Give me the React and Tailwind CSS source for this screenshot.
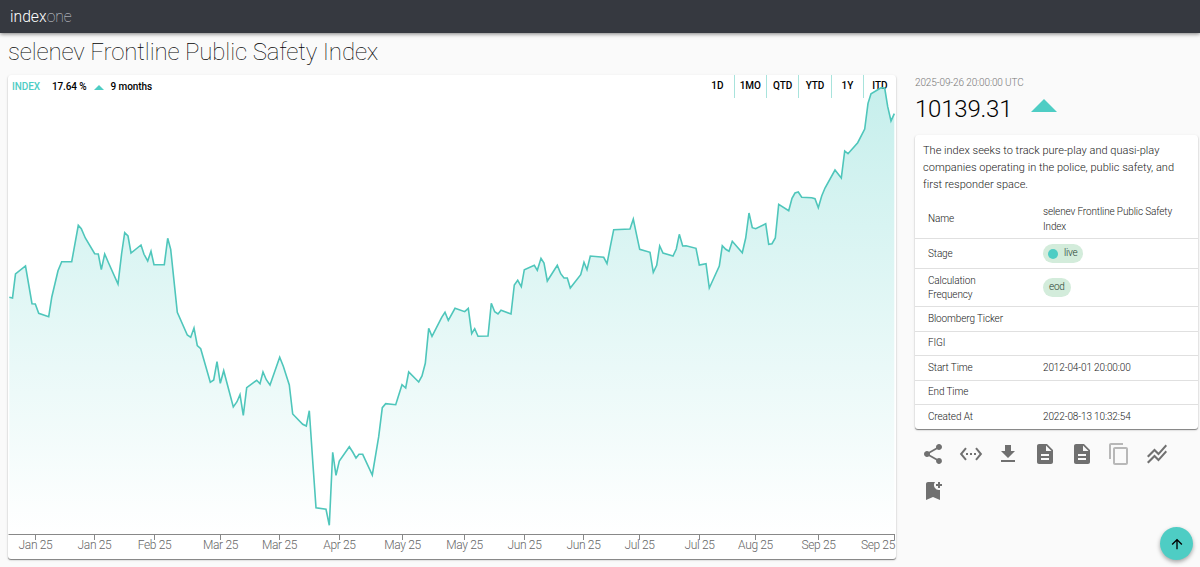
import {
    MdShare,
    MdSettingsEthernet,
    MdGetApp,
    MdDescription,
    MdContentCopy,
    MdStackedLineChart,
    MdBookmarkAdd,
    MdArrowUpward
} from 'react-icons/md';

const ranges = ['1D', '1MO', 'QTD', 'YTD', '1Y', 'ITD'];

const ticks = [
    [35.5, 'Jan 25'], [94.5, 'Jan 25'], [154.5, 'Feb 25'], [220.5, 'Mar 25'], [279.5, 'Mar 25'],
    [339.5, 'Apr 25'], [402.5, 'May 25'], [464.5, 'May 25'], [524.5, 'Jun 25'], [583.5, 'Jun 25'],
    [639.5, 'Jul 25'], [699.5, 'Jul 25'], [755.5, 'Aug 25'], [818.5, 'Sep 25'], [894.5, 'Sep 25'],
];

const line = `
    9.3,297.3 12.5,298 15.5,274 25.5,266 32,303.7 35.3,304 38.7,313.3 48.7,316.7 51.8,297 58,270.7
    61.7,261.7 71.7,261.7 78.3,225.3 81.3,228.7 85.3,238 94.7,253.7 98.3,254 101.3,269.7 104.7,254
    108.6,263 118,284 121.7,253 124.7,232.7 128,236 131,253 141,245 144,254.3 147.7,261 151,251.3
    154,264.7 164.3,264.7 167.7,238.3 170.7,249.3 177.3,312.3 187.3,335 190.7,337.3 194,328
    197.3,345.7 200.7,348.7 210.3,382.3 213.7,380 217,361.7 220.3,383.3 223.7,370.7 233.3,407
    237,401.7 240,394.7 243.3,415.3 246.7,387.7 256.7,380.3 260,383.7 263,372 266.3,379.7 270,385
    279.7,357.3 283.3,366.3 289.3,385 292.7,414 302.7,424.3 306.3,426 309.3,410.7 313,465 316,507.7
    326,509.3 329.3,525.3 332.7,452.3 336,475.3 339.3,461 349.3,446.7 352.7,452 356,458 359,454.3
    362.7,454.3 372.3,475 378.7,436.7 382.3,407.7 385.7,403.7 395.7,404.7 402,384.7 405.7,388
    408.7,372 418.7,382 422,376 425.3,363.3 428.7,328.3 432,336.3 441.7,317.3 445,312.3 448.3,320.3
    455,308.3 464.7,311.7 468.3,308.3 471.7,333.7 474.7,328.7 478,336.3 488,336 491.3,303.3
    494.7,311.7 498,314 501,310.3 511,314 514.3,285 517.7,280.3 521.3,286.7 524.3,269.7 534.3,265.3
    537.3,270.3 541,258.3 544,263 547.3,281 557.3,265.3 560.7,273.7 564,278 567.3,278 570.3,288
    580.7,274.7 584,262.3 587,269.7 590.3,256 603.7,257.3 607,263.7 610.3,246.7 613.7,229.7 630,229
    633.3,219 636.7,235.3 639.7,249.3 650,252.3 653.3,272.3 656.7,265.3 659.7,246 663,253 673,256
    676.3,249 679.3,234.3 682.7,246 686,245.7 696,248.3 699.3,265 706,263.7 709.3,288 719.3,266
    722.3,245.7 725.7,249.3 729,251.3 732.3,241.3 742.3,252.7 745.7,238 749,213 752.3,227.7
    755.7,228.7 765.7,223.7 768.7,244.3 772,243.7 775.3,238 778.7,204.3 788.7,210.7 792,198.3
    795,193 798.3,192 801.7,197.3 811.7,197.7 815,198.7 818.3,207.7 821.7,196 825,188 835,170
    841.3,178 844.7,151 848,153.7 857.7,142.7 864.7,129 868,103.3 871,93.7 881,87.7 884.7,88
    887.7,106.7 891,121 894.3,113.7`;

const rows = [
    { label: 'Name', value: 'selenev Frontline Public Safety Index', height: 'h-[38.5px]' },
    { label: 'Stage', value: <Badge dot>live</Badge>, height: 'h-[30px]' },
    { label: 'Calculation Frequency', value: <Badge>eod</Badge>, height: 'h-[38px]' },
    { label: 'Bloomberg Ticker', value: '', height: 'h-[24.5px]' },
    { label: 'FIGI', value: '', height: 'h-[24.5px]' },
    { label: 'Start Time', value: '2012-04-01 20:00:00', height: 'h-[24.5px]' },
    { label: 'End Time', value: '', height: 'h-[24.5px]' },
    { label: 'Created At', value: '2022-08-13 10:32:54', height: 'h-[24.5px]' },
];

const actions = [
    { icon: MdShare },
    { icon: MdSettingsEthernet },
    { icon: MdGetApp },
    { icon: MdDescription },
    { icon: MdDescription },
    { icon: MdContentCopy, disabled: true },
    { icon: MdStackedLineChart },
    { icon: MdBookmarkAdd },
];

function Badge({ dot, children }) {
    return (
        <span className="inline-flex h-[19px] items-center rounded-full bg-[#d3ecdb] px-1.5 pb-px text-[10px] font-light tracking-[-0.25px] text-[#1f3a2c]">
            {dot && <span className="-ml-px mr-1.5 mt-px h-2.5 w-2.5 rounded-full bg-[#4ecdc4]" />}
            {children}
        </span>
    );
}

function Chart() {
    return (
        <svg className="absolute inset-0 h-full w-full" viewBox="8 75 888 484">
            <defs>
                <linearGradient id="area" x1="0" y1="87" x2="0" y2="534" gradientUnits="userSpaceOnUse">
                    <stop offset="0" stopColor="#4ecdc4" stopOpacity="0.32" />
                    <stop offset="1" stopColor="#4ecdc4" stopOpacity="0" />
                </linearGradient>
            </defs>
            <polygon points={`9.3,534 ${line} 894.3,534`} fill="url(#area)" />
            <polyline points={line} fill="none" stroke="#4fc6bb" strokeWidth="1.6" />

            {/* Time axis */}
            <path d="M8.5 534.5H894.5" stroke="#888" fill="none" />
            {ticks.map(([x, label], i) => (
                <g key={x}>
                    <path d={`M${x} 534V540`} stroke="#888" />
                    <text
                        x={i === ticks.length - 1 ? 895 : x}
                        y="549"
                        textAnchor={i === ticks.length - 1 ? 'end' : 'middle'}
                        className="fill-[#666] text-[12px] font-light tracking-[-0.35px]"
                    >
                        {label}
                    </text>
                </g>
            ))}
        </svg>
    );
}

export default function App() {
    return (
        <div className="flex h-screen flex-col overflow-hidden bg-[#fafafa] font-[Roboto,sans-serif] text-black">
            {/* Top bar */}
            <header className="z-10 flex h-[33px] shrink-0 items-center bg-[#363940] px-2.5 text-[15.7px] font-light text-white shadow-[0_1px_4px_rgba(0,0,0,0.5)]">
                index<span className="font-thin text-gray-300">one</span>
            </header>

            <h1 className="h-[42px] shrink-0 pl-2 pt-[2px] text-[24px] font-thin leading-[34px] tracking-[-0.13px] text-black">
                selenev Frontline Public Safety Index
            </h1>

            <main className="flex items-start">
                {/* Chart card */}
                <section className="relative ml-2 h-[484px] w-[888px] shrink-0 rounded-[3px] bg-white shadow-[0_1px_1px_rgba(0,0,0,0.45),0_1px_3px_rgba(0,0,0,0.12)]">
                    <div className="flex justify-between text-[10px] font-medium tracking-[-0.1px]">
                        <div className="flex h-[23px] items-center pl-1">
                            <span className="text-[#4ecdc4]">INDEX</span>
                            <span className="ml-3">17.64 %</span>
                            <span className="ml-[7px] mt-0.5 border-x-[5px] border-b-[5px] border-x-transparent border-b-[#4ecdc4]" />
                            <span className="ml-[7px]">9 months</span>
                        </div>
                        <div className="flex h-[23px] pr-[0.5px]">
                            {ranges.map((range) => (
                                <button
                                    key={range}
                                    className="w-[32.4px] border-l border-[#a8e3dc] pb-0.5 first:border-l-0"
                                >
                                    {range}
                                </button>
                            ))}
                        </div>
                    </div>
                    <Chart />
                </section>

                {/* Index details */}
                <aside className="ml-[19px] w-[283px] shrink-0">
                    <div className="text-[10px] font-light leading-4 tracking-[-0.12px] text-[#777]">2025-09-26 20:00:00 UTC</div>
                    <div className="flex h-[44px] items-center pb-2">
                        <span className="text-[24px] font-light leading-8 tracking-[-0.2px]">10139.31</span>
                        <span className="mb-[7px] ml-[19px] border-x-[13px] border-b-[13px] border-x-transparent border-b-[#4ecdc4]" />
                    </div>
                    <div className="h-[294px] rounded-[3px] bg-white pt-2 shadow-[0_1px_1px_rgba(0,0,0,0.45),0_1px_3px_rgba(0,0,0,0.12)]">
                        <p className="mx-2 text-[11px] font-light leading-[16.8px] tracking-[0.02px] text-[#222]">
                            The index seeks to track pure-play and quasi-play companies operating in the police, public
                            safety, and first responder space.
                        </p>
                        <div className="mt-[7.5px] text-[10px] font-light leading-[14.3px] tracking-[-0.13px] text-[#222]">
                            {rows.map((row) => (
                                <div
                                    key={row.label}
                                    className={`flex items-center border-b border-[#e0e0e0] pl-[13px] last:border-b-0 ${row.height}`}
                                >
                                    <div className="w-[115px] pr-8">{row.label}</div>
                                    <div className="flex w-[145px]">{row.value}</div>
                                </div>
                            ))}
                        </div>
                    </div>
                    <div className="mt-[13px] flex flex-wrap gap-[13.2px] pl-[6.4px]">
                        {actions.map(({ icon: Icon, disabled }, i) => (
                            <Icon key={i} size={24} className={disabled ? 'text-[#b8b8b8]' : 'text-[#707070]'} />
                        ))}
                    </div>
                </aside>
            </main>

            <button className="fixed bottom-[7px] right-[7px] flex h-[33px] w-[33px] items-center justify-center rounded-full bg-[#4ecdc4] shadow-[0_2px_4px_rgba(0,0,0,0.35)]">
                <MdArrowUpward size={16} />
            </button>
        </div>
    );
}
